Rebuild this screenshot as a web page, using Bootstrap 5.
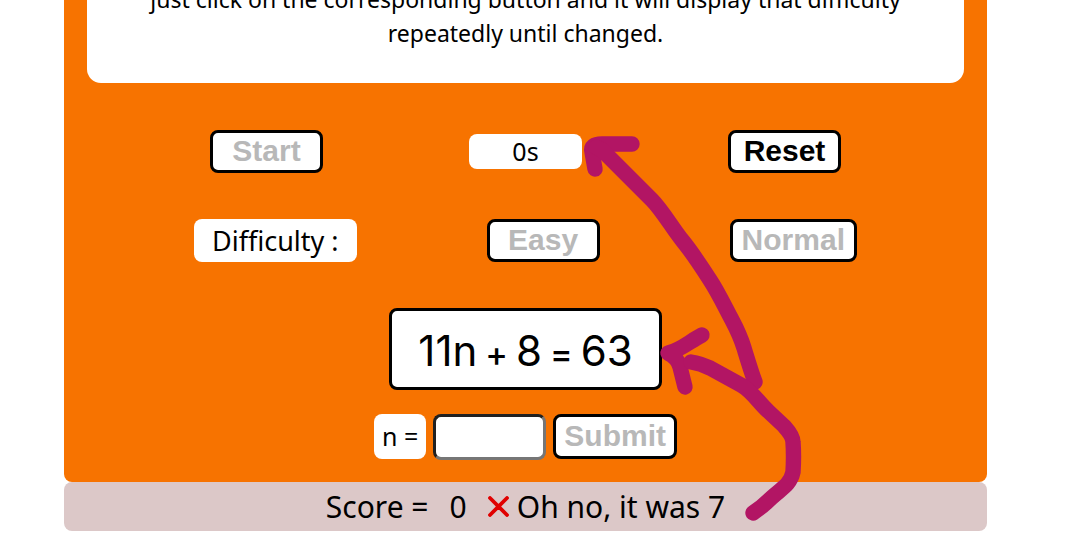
<!DOCTYPE html>
<html lang="en">
<head>
<meta charset="utf-8">
<meta name="viewport" content="width=device-width, initial-scale=1">
<title>Solve for n</title>
<link href="https://cdn.jsdelivr.net/npm/bootstrap@5.3.0/dist/css/bootstrap.min.css" rel="stylesheet">
<style>
body { font-family: "Noto Sans", "Open Sans", sans-serif; color: #000; background: #fff; overflow-x: hidden; }
.page { padding-left: 64px; padding-right: 79px; overflow: hidden; }
.board { display: flow-root; }
.game { background: #f77300; border-radius: 0 0 8px 8px; padding: 0 23px 22px; }
.intro { background: #fff; border-radius: 0 0 14px 14px; font-size: 23px; line-height: 34px; margin-top: -18px; padding-bottom: 33px; }
.controls { margin: 0 -23px; padding-top: 46px; }
.controls-first { padding-top: 47px; }
.chip { background: #fff; border-radius: 8px; line-height: 35px; }
.timer { width: 113px; font-size: 25px; }
.chip-label { font-size: 27px; padding: 4px 18px; }
.chip-n { font-size: 25px; padding: 5px 8px; }
.key { font: bold 30px/34px "Liberation Sans", Arial, sans-serif; color: #000; background: #fff; border: 3px solid #000; border-radius: 8px; min-width: 113px; padding: 1px 8px 2px; }
.key:disabled { color: #b8b8b8; }
.key-wide { padding-left: 9px; padding-right: 9px; }
.answer-row { height: 46px; gap: 7px; }
.answer-row .key, .answer-row .chip { height: 45px; }
.answer { width: 113px; height: 46px; background: #fff; border: 3px inset #767676; border-radius: 8px; font-size: 25px; padding: 0 6px; }
.equation { background: #fff; border: 3px solid #000; border-radius: 8px; width: 273px; font: 42px/72px Inter, sans-serif; padding-top: 4px; gap: 8px; }
.sign { font-size: 34px; line-height: 34px; font-weight: 500; }
.result { background: #dcc8c8; border-radius: 8px; font-size: 30px; line-height: 49px; }
.points { margin: 0 21px; }
.cross { margin-right: 8px; }
.arrows { left: 50%; top: 0; pointer-events: none; }
</style>
<script src="https://cdn.jsdelivr.net/npm/bootstrap@5.3.0/dist/js/bootstrap.bundle.min.js"></script>
</head>
<body>
<div class="page">
  <main class="board position-relative">
    <section class="game">
      <p class="intro text-center mb-0">just click on the corresponding button and it will display that difficulty<br>repeatedly until changed.</p>
      <div class="controls controls-first d-flex justify-content-evenly align-items-center">
        <button type="button" class="key" disabled>Start</button>
        <div class="chip timer text-center">0s</div>
        <button type="button" class="key">Reset</button>
      </div>
      <div class="controls d-flex justify-content-evenly align-items-center">
        <div class="chip chip-label">Difficulty :</div>
        <button type="button" class="key" disabled>Easy</button>
        <button type="button" class="key key-wide" disabled>Normal</button>
      </div>
      <div class="controls d-flex justify-content-center">
        <div class="equation d-flex justify-content-center align-items-baseline"><span>11n</span> <span class="sign">+</span> <span>8</span> <span class="sign">=</span> <span>63</span></div>
      </div>
      <form class="answer-row d-flex justify-content-center mt-4" onsubmit="return false">
        <label class="chip chip-n" for="answer">n =</label>
        <input class="answer" id="answer" type="text" autocomplete="off">
        <button type="submit" class="key" disabled>Submit</button>
      </form>
    </section>
    <section class="result d-flex justify-content-center align-items-center">
      <span>Score =</span><span class="points">0</span>
      <svg class="cross" width="21" height="21" viewBox="0 0 21 21" aria-hidden="true"><path d="M2 2 19 19M19 2 2 19" stroke="#e00000" stroke-width="3.8" stroke-linecap="round"/></svg>
      <span>Oh no, it was 7</span>
    </section>
    <svg class="arrows position-absolute" width="290" height="538" viewBox="525 0 290 538" fill="none" stroke="#b21564" stroke-width="15.4" stroke-linecap="round" stroke-linejoin="round" aria-hidden="true">
      <path d="M631 144H601Q589 144 591 152L594 169"/>
      <path d="M595 147 601 150Q615 164 632 181Q643 192 651 200C661 210 672 229 681 240C690 251 700 266 709 280C717 292 724 307 731 320Q739 335 743 348C747 361 750 371 754 382"/>
      <path d="M701 335C689 341 680 350 667 353Q677 358 679 367L684 387"/>
      <path d="M690 362C697 363 703 365 709 368L740 385C751 391 758 403 767 411L783 426Q792 436 792 442Q793 456 792 472C789 486 779 489 767 501Q761 507 752 513"/>
    </svg>
  </main>
</div>
</body>
</html>
